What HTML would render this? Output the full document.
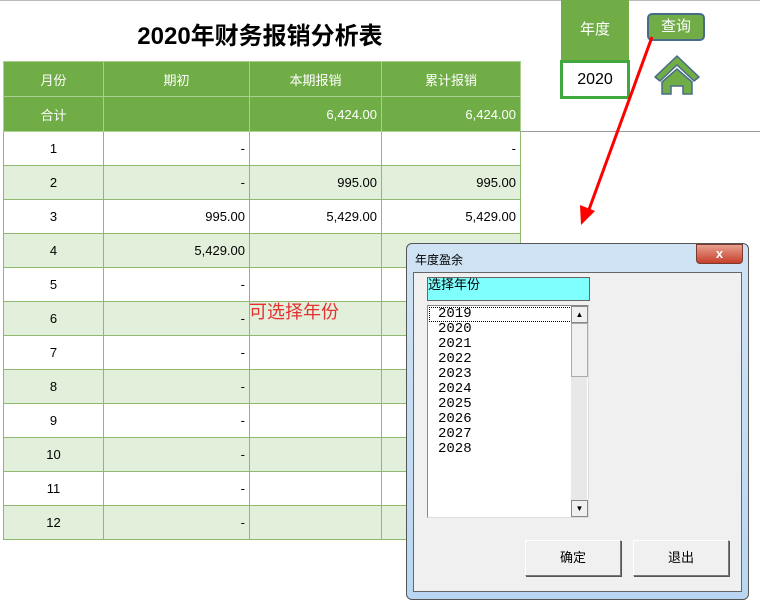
<html><head><style>
body{margin:0;width:760px;height:613px;overflow:hidden;background:#fff;font-family:"Liberation Sans","Noto Sans CJK SC",sans-serif;position:relative}
.a{position:absolute}
table{position:absolute;left:3px;top:61px;border-collapse:collapse;font-size:13px}
td{border:1px solid #8fb870;height:34px;padding:0 4px;text-align:right}
td:first-child{text-align:center}
tr.h td{background:#70ad47;color:#fff;text-align:center;border-color:#a9d08e;height:35px}
tr.g td{background:#e2efda}
.btn{position:absolute;background:#f0f0f0;border:1px solid;border-color:#fff #777 #777 #fff;box-shadow:1px 1px 0 #555;font-size:13px;text-align:center;line-height:34px}
</style></head><body>
<div class="a" style="left:0;top:0;width:760px;height:1px;background:#bbb"></div>
<div class="a" style="left:0;top:16px;width:520px;text-align:center;font-size:24px;font-weight:bold">2020年财务报销分析表</div>
<table>
<colgroup><col style="width:100px"><col style="width:146px"><col style="width:132px"><col style="width:139px"></colgroup>
<tr class="h"><td>月份</td><td>期初</td><td>本期报销</td><td>累计报销</td></tr>
<tr class="h"><td>合计</td><td></td><td style="text-align:right">6,424.00</td><td style="text-align:right">6,424.00</td></tr>
<tr><td>1</td><td>-</td><td></td><td>-</td></tr>
<tr class="g"><td>2</td><td>-</td><td>995.00</td><td>995.00</td></tr>
<tr><td>3</td><td>995.00</td><td>5,429.00</td><td>5,429.00</td></tr>
<tr class="g"><td>4</td><td>5,429.00</td><td></td><td></td></tr>
<tr><td>5</td><td>-</td><td></td><td></td></tr>
<tr class="g"><td>6</td><td>-</td><td></td><td></td></tr>
<tr><td>7</td><td>-</td><td></td><td></td></tr>
<tr class="g"><td>8</td><td>-</td><td></td><td></td></tr>
<tr><td>9</td><td>-</td><td></td><td></td></tr>
<tr class="g"><td>10</td><td>-</td><td></td><td></td></tr>
<tr><td>11</td><td>-</td><td></td><td></td></tr>
<tr class="g"><td>12</td><td>-</td><td></td><td></td></tr>
</table>
<div class="a" style="left:520px;top:131px;width:240px;height:1px;background:#999"></div>
<div class="a" style="left:249px;top:298px;color:#e53030;font-size:18px">可选择年份</div>
<div class="a" style="left:561px;top:0;width:68px;height:61px;background:#70ad47;color:#fff;font-size:15px;text-align:center;line-height:60px">年度</div>
<div class="a" style="left:560px;top:60px;width:64px;height:33px;border:3px solid #3fa83f;font-size:16px;text-align:center;line-height:34px">2020</div>
<div class="a" style="left:647px;top:13px;width:54px;height:24px;background:#70ad47;border:2px solid #4a6a8a;border-radius:5px;color:#fff;font-size:15px;text-align:center;line-height:24px">查询</div>
<svg class="a" style="left:652px;top:54px" width="50" height="42" viewBox="0 0 50 42"><path d="M25 2 L47 23 L42 27 L25 11 L8 27 L3 23 Z" fill="#70ad47" stroke="#4a6a8a" stroke-width="1.5" stroke-linejoin="round"/><path d="M10 28 L25 15 L40 28 L40 40 L31 40 L31 32 L19 32 L19 40 L10 40 Z" fill="#70ad47" stroke="#4a6a8a" stroke-width="1.5"/></svg>
<svg class="a" style="left:575px;top:35px" width="90" height="195"><line x1="77" y1="2" x2="12" y2="180" stroke="#f00" stroke-width="3"/><path d="M6 190 L5 170 L20 176 Z" fill="#f00"/></svg>
<div class="a" style="left:406px;top:243px;width:341px;height:355px;border:1px solid #555;border-radius:6px;background:linear-gradient(#cfe3f4,#b9d7f2)"></div>
<div class="a" style="left:415px;top:251px;font-size:12px">年度盈余</div>
<div class="a" style="left:696px;top:244px;width:45px;height:18px;background:linear-gradient(#e8a090,#c5402a);border:1px solid #7a3a30;border-radius:0 0 4px 4px;color:#fff;font-weight:bold;text-align:center;font-size:13px;line-height:18px">x</div>
<div class="a" style="left:413px;top:272px;width:327px;height:318px;background:#f0f0f0;border:1px solid #666"></div>
<div class="a" style="left:427px;top:277px;width:161px;height:22px;background:#80ffff;border:1px solid #666;font-size:13px;line-height:14px">选择年份</div>
<div class="a" style="left:427px;top:305px;width:160px;height:211px;background:#fff;border:1px solid #888;border-right-color:#ddd;border-bottom-color:#ddd"></div>
<div class="a" style="left:429px;top:307px;width:141px;height:13px;border:1px dotted #000"></div>
<div class="a" style="left:438px;top:307px;font-family:'Liberation Mono',monospace;font-size:14px;line-height:15px">2019<br>2020<br>2021<br>2022<br>2023<br>2024<br>2025<br>2026<br>2027<br>2028</div>
<div class="a" style="left:571px;top:306px;width:16px;height:210px;background:#e8e8e8"></div>
<div class="a" style="left:571px;top:306px;width:15px;height:15px;background:#f0f0f0;border:1px solid #888;font-size:8px;text-align:center;line-height:15px">▲</div>
<div class="a" style="left:571px;top:323px;width:15px;height:52px;background:#f0f0f0;border:1px solid #aaa"></div>
<div class="a" style="left:571px;top:500px;width:15px;height:15px;background:#f0f0f0;border:1px solid #888;font-size:8px;text-align:center;line-height:15px">▼</div>
<div class="btn" style="left:525px;top:540px;width:94px;height:34px">确定</div>
<div class="btn" style="left:633px;top:540px;width:94px;height:34px">退出</div>
</body></html>
